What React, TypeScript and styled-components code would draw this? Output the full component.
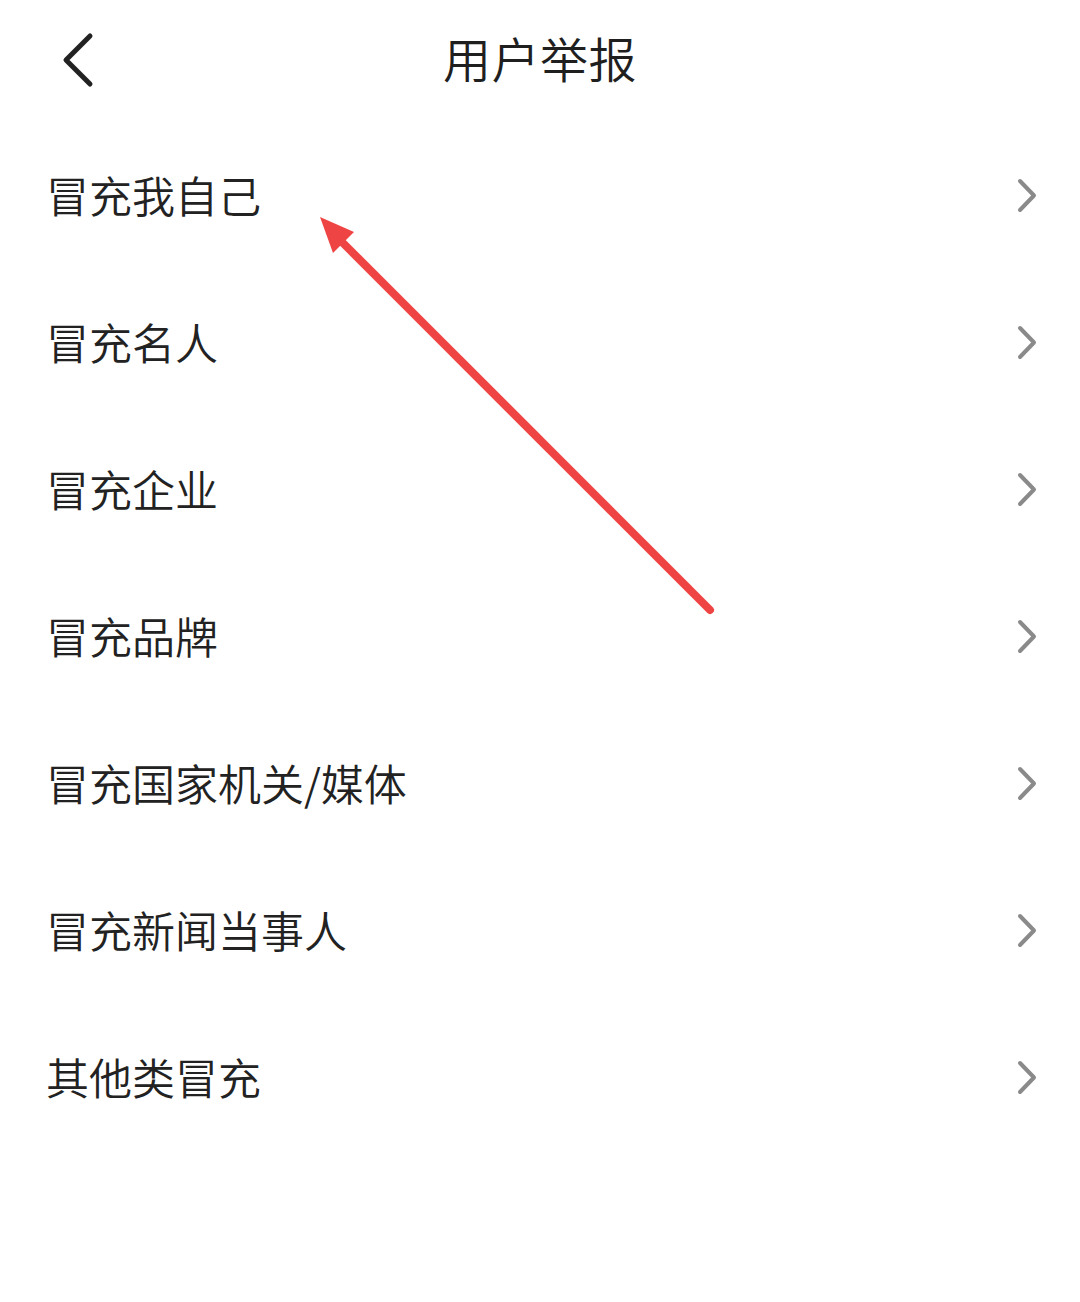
import React from 'react';
import styled, { createGlobalStyle } from 'styled-components';

const GlobalStyle = createGlobalStyle`
	html,
	body {
		margin: 0;
		padding: 0;
		background: #ffffff;
	}
	body {
		font-family: 'Noto Sans CJK SC', 'Noto Sans', sans-serif;
		color: #222222;
	}
`;

const Page = styled.div`
	position: relative;
	width: 1080px;
	height: 1302px;
	background: #ffffff;
	overflow: hidden;
`;

const Header = styled.header`
	height: 122px;
	display: flex;
	align-items: center;
	justify-content: center;
	position: relative;
	padding-bottom: 8px;
	box-sizing: border-box;
`;

const BackButton = styled.button`
	position: absolute;
	left: 50px;
	top: 20px;
	width: 60px;
	height: 80px;
	border: none;
	background: transparent;
	padding: 0;
	display: flex;
	align-items: center;
	justify-content: center;
`;

const Title = styled.h1`
	margin: 0;
	font-size: 48px;
	font-weight: 350;
	color: #1f1f1f;
	letter-spacing: 0.5px;
`;

const List = styled.ul`
	list-style: none;
	margin: 0;
	padding: 0;
`;

const Row = styled.li`
	height: 147px;
	display: flex;
	align-items: center;
	justify-content: space-between;
	padding: 0 40px 0 46px;
`;

const Label = styled.span`
	font-size: 43px;
	font-weight: 350;
	color: #222222;
	line-height: 1;
	margin-top: -3px;
`;

const Overlay = styled.svg`
	position: absolute;
	left: 0;
	top: 0;
	pointer-events: none;
`;

const items = ['冒充我自己', '冒充名人', '冒充企业', '冒充品牌', '冒充国家机关/媒体', '冒充新闻当事人', '其他类冒充'];

const Chevron = () => (
	<svg width="24" height="40" viewBox="0 0 24 40">
		<polyline points="4,5 18,19.5 4,34" fill="none" stroke="#8a8a8a" strokeWidth="4" strokeLinecap="round" strokeLinejoin="round" />
	</svg>
);

export default function App() {
	return (
		<>
			<GlobalStyle />
			<Page>
				<Header>
					<BackButton aria-label="back">
						<svg width="40" height="60" viewBox="0 0 40 60">
							<polyline points="30,6 6,30 30,54" fill="none" stroke="#222222" strokeWidth="5" strokeLinecap="round" strokeLinejoin="round" />
						</svg>
					</BackButton>
					<Title>用户举报</Title>
				</Header>
				<List>
					{items.map((t) => (
						<Row key={t}>
							<Label>{t}</Label>
							<Chevron />
						</Row>
					))}
				</List>
				<Overlay width="1080" height="1302" viewBox="0 0 1080 1302">
					<line x1="710" y1="610" x2="340" y2="240" stroke="#ef4444" strokeWidth="8" strokeLinecap="round" />
					<polygon points="320,217 354,232 333,253" fill="#ef4444" />
				</Overlay>
			</Page>
		</>
	);
}
